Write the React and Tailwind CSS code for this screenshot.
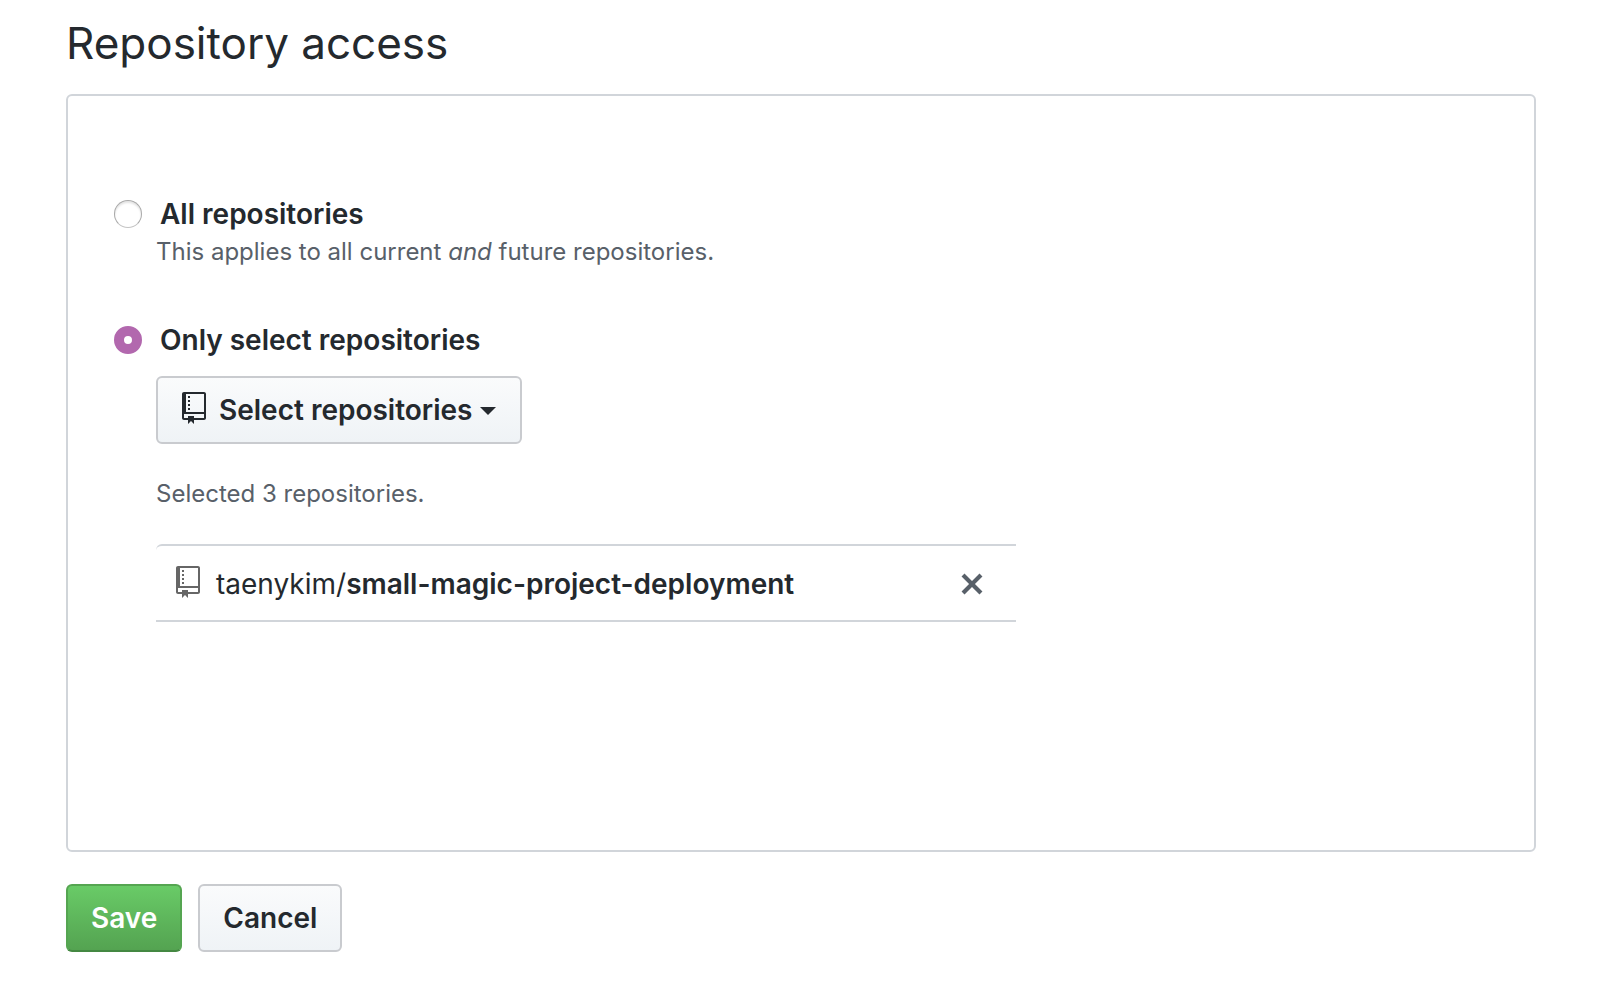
import { useState } from "react";

function RepoIcon({ className }) {
  return (
    <svg viewBox="0 0 12 16" className={className} fill="currentColor" aria-hidden="true">
      <path
        fillRule="evenodd"
        d="M4 9H3V8h1v1zm0-3H3v1h1V6zm0-2H3v1h1V4zm0-2H3v1h1V2zm8-1v12c0 .55-.45 1-1 1H6v2l-1.5-1.5L3 16v-2H1c-.55 0-1-.45-1-1V1c0-.55.45-1 1-1h10c.55 0 1 .45 1 1zm-1 10H1v2h2v-1h3v1h5v-2zm0-10H2v9h9V1z"
      />
    </svg>
  );
}

function CloseIcon({ className }) {
  return (
    <svg viewBox="0 0 12 16" className={className} fill="currentColor" aria-hidden="true">
      <path
        fillRule="evenodd"
        d="M7.48 8l3.75 3.75-1.48 1.48L6 9.48l-3.75 3.75-1.48-1.48L4.52 8 .77 4.25l1.48-1.48L6 6.52l3.75-3.75 1.48 1.48L7.48 8z"
      />
    </svg>
  );
}

function AccessOption({ id, label, checked, onChange }) {
  return (
    <div className="flex items-center gap-[18px]">
      <input
        type="radio"
        id={id}
        name="access"
        checked={checked}
        onChange={onChange}
        className="size-7 shrink-0 appearance-none rounded-full border border-[#a9a9a9] border-b-[#c4c4c4] bg-white shadow-[inset_0_2px_2px_#e4e4e4] checked:border-[10px] checked:border-[#b268ae] checked:shadow-none"
      />
      <label htmlFor={id} className="text-[28px] leading-[42px] font-semibold">
        {label}
      </label>
    </div>
  );
}

const buttonBase =
  "inline-flex h-[68px] items-center rounded-md border-2 text-[28px] leading-10 font-semibold";
const buttonDefault =
  "border-[#c9cbcf] bg-linear-to-b from-[#fafbfc] to-[#eff3f6] text-[#24292e]";
const buttonPrimary =
  "border-[#55a551] border-b-[#448842] bg-linear-to-b from-[#69cb67] to-[#54a351] text-white";

export default function App() {
  const [access, setAccess] = useState("selected");

  return (
    <main className="min-h-screen bg-white pt-4 pr-[70px] pb-[52px] pl-[66px] font-['Inter','Liberation_Sans',sans-serif] text-[#24292e]">
      <h1 id="access-heading" className="text-[44px] leading-[54px] font-normal">
        Repository access
      </h1>

      <form onSubmit={(e) => e.preventDefault()}>
        <fieldset
          aria-labelledby="access-heading"
          className="mt-6 rounded-md border-2 border-[#d1d5da] pt-[97px] pr-[46px] pb-[228px] pl-[46px]"
        >
          <AccessOption
            id="access-all"
            label="All repositories"
            checked={access === "all"}
            onChange={() => setAccess("all")}
          />
          <p className="pl-[42px] text-[24px] leading-[34px] text-[#586069]">
            This applies to all current <em>and</em> future repositories.
          </p>

          <div className="mt-[50px]">
            <AccessOption
              id="access-selected"
              label="Only select repositories"
              checked={access === "selected"}
              onChange={() => setAccess("selected")}
            />
            <div className="pt-[15px] pl-[42px]">
              <button type="button" className={buttonBase + " px-6 " + buttonDefault}>
                <RepoIcon className="mb-1 h-8 w-6" />
                <span className="ml-[13px]">Select repositories</span>
                <span className="mt-[2px] ml-[7px] border-x-8 border-t-8 border-x-transparent border-t-[#24292e]" />
              </button>

              <p className="mt-8 text-[24px] leading-9 text-[#586069]">Selected 3 repositories.</p>

              <ul className="mt-8 max-w-[860px]">
                <li className="flex items-center rounded-tl-md border-y-2 border-[#d1d5da] pt-[17px] pr-8 pb-[15px] pl-5">
                  <RepoIcon className="mb-1 h-8 w-6 shrink-0 text-[#666]" />
                  <span className="ml-4 grow text-[28px] leading-[42px]">
                    taenykim/<strong className="font-semibold">small-magic-project-deployment</strong>
                  </span>
                  <button type="button" aria-label="Remove repository" className="text-[#586069]">
                    <CloseIcon className="h-8 w-6" />
                  </button>
                </li>
              </ul>
            </div>
          </div>
        </fieldset>

        <div className="mt-8 flex gap-4">
          <button type="submit" className={buttonBase + " px-[23px] " + buttonPrimary}>
            Save
          </button>
          <button type="button" className={buttonBase + " px-[23px] " + buttonDefault}>
            Cancel
          </button>
        </div>
      </form>
    </main>
  );
}
